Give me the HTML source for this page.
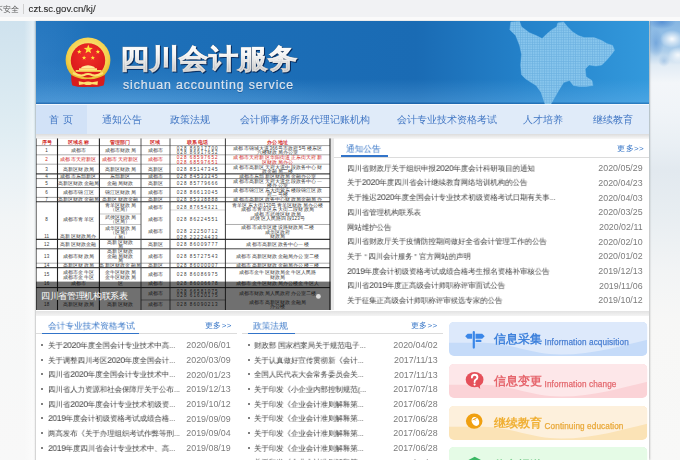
<!DOCTYPE html>
<html><head><meta charset="utf-8">
<style>
*{margin:0;padding:0;box-sizing:border-box}
html,body{width:680px;height:460px;overflow:hidden;background:#fff;font-family:"Liberation Sans",sans-serif}
.abs{position:absolute}
#addr{left:0;top:0;width:680px;height:17px;background:#f1f2f4}
#addrline{left:0;top:17px;width:680px;height:4px;background:#fafafa}
#addr .t1{left:-5.5px;top:4px;font-size:8px;line-height:11px;color:#5a5a5a;white-space:nowrap;transform:scale(1.02);will-change:transform}
#addr .sep{left:22.5px;top:4px;width:1px;height:10px;background:#cfcfcf}
#addr .url{left:28.6px;top:2.8px;font-size:9.6px;line-height:12px;color:#2a2a2a;white-space:nowrap;-webkit-text-stroke:.1px #2a2a2a}
#sky{left:0;top:21px;width:680px;height:439px;
 background:linear-gradient(90deg,rgba(255,255,255,0) 24px,rgba(255,255,255,.45) 33px,rgba(255,255,255,0) 35px),
 linear-gradient(180deg,#cfe2ee 0px,#d6e7f0 50px,#e0edf3 110px,#e9f1f5 150px,#f2f5f6 200px,#f6f7f7 260px,#f8f8f8 439px)}
#skyr{left:650px;top:21px;width:30px;height:439px;
 background:
 radial-gradient(ellipse 12px 9px at 22px 18px,rgba(255,255,255,.95),rgba(255,255,255,0)),
 radial-gradient(ellipse 10px 8px at 28px 34px,rgba(255,255,255,.85),rgba(255,255,255,0)),
 radial-gradient(ellipse 14px 7px at 12px 1px,rgba(80,140,210,.85),rgba(80,140,210,0)),
 radial-gradient(ellipse 8px 14px at 6px 22px,rgba(100,155,215,.7),rgba(100,155,215,0)),
 radial-gradient(ellipse 6px 6px at 14px 40px,rgba(130,175,220,.5),rgba(130,175,220,0)),
 linear-gradient(180deg,#86b6e2 0px,#94bfe6 14px,#accdea 30px,#e2ecf5 44px,#f3f6f9 62px,#f0f4f8 90px,#e9eff4 125px,#e2e9ef 150px,#e7edf1 190px,#f2f4f5 250px,#f7f7f6 300px,#f8f8f7 439px)}
#page{left:36px;top:21px;width:613px;height:439px;background:#fff;box-shadow:1.5px 0 1.5px rgba(0,0,0,.16),-1px 0 1px rgba(0,0,0,.14)}
#hdr{left:0;top:0;width:613px;height:83px;background:radial-gradient(ellipse 220px 45px at 80px 83px,rgba(90,165,225,.4),rgba(90,165,225,0)),radial-gradient(ellipse 60px 80px at 0px 40px,rgba(80,150,215,.3),rgba(80,150,215,0)),linear-gradient(90deg,#1f72bb 0%,#1c6eb7 30%,#1a6bb4 62%,#2482ca 80%,#3399dc 100%)}
#nav{left:0;top:83px;width:613px;height:29.7px;background:#e0ebf9;border-top:1px solid #f4f8fd}
#nav .it{top:0px;height:29.7px;line-height:29.7px;font-size:10px;font-weight:500;transform:scale(1.0);transform-origin:0 50%;will-change:transform;color:#4277c4;white-space:nowrap}
#nav .act{background:#d2e2f7}
.title{font-size:30px;font-weight:900;white-space:nowrap;line-height:36px}
.t-under{color:#a9a9a9;-webkit-text-stroke:1.1px #a9a9a9;filter:drop-shadow(1px 1.2px .5px rgba(0,25,70,.8))}
.t-over{background:linear-gradient(180deg,#ffffff 0%,#f0f0f0 35%,#c4c4c4 70%,#a8a8a8 100%);-webkit-background-clip:text;background-clip:text;-webkit-text-fill-color:transparent;-webkit-text-stroke:.35px rgba(255,255,255,.5)}
.sub{font-size:12.3px;color:#d8e2ec;white-space:nowrap;letter-spacing:0.9px;line-height:14px;-webkit-text-stroke:.2px #e2eaf3;text-shadow:0 .6px .6px rgba(0,30,80,.35)}
.cap{font-size:9px;font-weight:500;transform:scale(.963);transform-origin:0 0;color:#fff;white-space:nowrap;line-height:12px}
.ctitle{font-size:12px;font-weight:600;white-space:nowrap;line-height:16px;transform:scale(1.01);transform-origin:0 0;will-change:transform}
.cen{font-size:8.2px;letter-spacing:.1px;white-space:nowrap;line-height:9px;-webkit-text-stroke:.25px currentColor}
.dg{font-size:9.3px;letter-spacing:-.45px;line-height:1px}
.gband{background:#e8e8e8}
.panel{background:#fff}
.tab{font-size:9px;transform:scale(.964);transform-origin:0 0;will-change:transform;color:#3a78c8;white-space:nowrap}
.more{font-size:8px;font-weight:500;color:#3a78c8;white-space:nowrap;letter-spacing:.3px}
.row{font-size:8px;transform:scale(.925);transform-origin:0 50%;will-change:transform;color:#3a3a3a;white-space:nowrap;height:14.7px;line-height:14.7px}
.date{font-size:8.85px;color:#7c7c7c;white-space:nowrap;height:14.7px;line-height:14.7px}
.dot{width:2px;height:2px;background:#555;border-radius:1px}
</style></head><body>
<div id="addr" class="abs">
 <div class="abs t1">不安全</div>
 <div class="abs sep"></div>
 <div class="abs url">czt.sc.gov.cn/kj/</div>
</div>
<div id="addrline" class="abs"></div>
<div id="sky" class="abs"></div><div id="skyr" class="abs"></div>
<div id="page" class="abs">
 <div id="hdr" class="abs">
  <div class="abs" style="left:0;top:0;width:613px;height:83px;background:linear-gradient(180deg,rgba(255,255,255,0) 70%,rgba(130,195,245,.28) 97%,rgba(20,80,150,.5) 100%)"></div>
  <svg class="abs" style="left:0;top:0" width="613" height="83" viewBox="0 0 613 83">
   <defs>
    <pattern id="dots" width="2.4" height="2.4" patternUnits="userSpaceOnUse"><rect width="2.4" height="2.4" fill="#6fb3e2"/><rect width="1.8" height="1.8" fill="#8fcaef"/></pattern>
   </defs>
   <polygon fill="url(#dots)" stroke="#8ccaf0" stroke-width=".6" stroke-opacity=".6" opacity=".95" points="474.8,0.9 483.6,0.5 485.5,5.8 493.4,11.7 500.2,14.6 506.1,17.6 511.0,12.7 515.9,8.7 520.8,5.8 521.8,1.9 527.6,0.9 531.5,5.8 536.4,10.7 542.3,14.6 548.2,16.6 558.0,16.6 565.8,19.5 570.7,22.5 576.6,24.4 578.5,29.3 575.6,33.2 570.7,39.1 565.8,44.0 559.9,45.0 553.1,44.0 549.2,47.9 550.1,55.7 556.0,59.6 557.0,64.5 550.1,65.5 543.3,65.5 537.4,64.5 533.5,59.6 527.6,61.6 522.7,69.4 518.8,76.3 514.9,83.1 509.0,83.1 505.1,71.4 500.2,64.5 495.3,61.6 489.5,57.7 485.5,53.8 484.6,44.0 485.5,33.2 483.6,24.4 479.7,14.6 473.8,8.7"/>
  </svg>
  <svg class="abs" style="left:0;top:0" width="613" height="83" viewBox="36 21 613 83">
   <defs>
    <radialGradient id="gold" cx="50%" cy="40%" r="60%"><stop offset="0" stop-color="#fff3a0"/><stop offset=".75" stop-color="#f4d04a"/><stop offset="1" stop-color="#e0b020"/></radialGradient>
    <radialGradient id="redg" cx="50%" cy="35%" r="65%"><stop offset="0" stop-color="#f2302a"/><stop offset="1" stop-color="#d8181a"/></radialGradient>
   </defs>
   <circle cx="88" cy="60" r="22.4" fill="url(#gold)"/>
   <circle cx="88" cy="60.4" r="17.2" fill="url(#redg)"/>
   <path d="M71.2 75 Q71 82 72.5 85.5 Q80 87.8 88 86.8 Q96 87.8 103.5 85.5 Q105 82 104.8 75 Q96 80 88 79 Q80 80 71.2 75 Z" fill="#d81c1c"/>
   <polygon fill="#ffe23a" points="88.30,44.60 89.48,47.77 92.87,47.92 90.22,50.02 91.12,53.28 88.30,51.42 85.48,53.28 86.38,50.02 83.73,47.92 87.12,47.77"/>
   <polygon fill="#ffe23a" points="79.30,49.40 79.89,50.98 81.58,51.06 80.26,52.11 80.71,53.74 79.30,52.81 77.89,53.74 78.34,52.11 77.02,51.06 78.71,50.98"/><polygon fill="#ffe23a" points="97.90,49.40 98.49,50.98 100.18,51.06 98.86,52.11 99.31,53.74 97.90,52.81 96.49,53.74 96.94,52.11 95.62,51.06 97.31,50.98"/><polygon fill="#ffe23a" points="84.10,55.50 84.67,57.02 86.29,57.09 85.02,58.10 85.45,59.66 84.10,58.77 82.75,59.66 83.18,58.10 81.91,57.09 83.53,57.02"/><polygon fill="#ffe23a" points="92.80,55.50 93.37,57.02 94.99,57.09 93.72,58.10 94.15,59.66 92.80,58.77 91.45,59.66 91.88,58.10 90.61,57.09 92.23,57.02"/>
   <path d="M82 66.8 Q88 63.8 94 66.8 L95.5 68.5 H80.5 Z" fill="#ffeb9a"/>
   <rect x="79" y="68.3" width="18" height="1.8" fill="#ffe680"/>
   <rect x="75.7" y="70" width="25.8" height="1.8" fill="#f8dc60"/>
   <path d="M73 73 Q80 76.5 84 75 Q88 72.8 92 75 Q96 76.5 103 73" stroke="#ffe070" stroke-width="2" fill="none"/>
   <path d="M78.7 81.2 L84 82.3 Q88 80.5 92 82.3 L97.9 81.2 L97.5 85 L92 84.2 Q88 86 84 84.2 L79 85 Z" fill="#ffe070"/>
  </svg>
  <div class="abs title t-under" style="left:84.4px;top:21.6px;transform:scale(.985,.91);transform-origin:0 0">四川会计服务</div>
  <div class="abs title t-over" style="left:84.4px;top:21.6px;transform:scale(.985,.91);transform-origin:0 0">四川会计服务</div>
  <div class="abs sub" style="left:87px;top:56.6px">sichuan accounting service</div>
 </div>
 <div id="nav" class="abs">
  <div class="abs act" style="left:0;top:0;width:50.6px;height:29.7px"></div><div class="abs it" style="left:13.2px;letter-spacing:4px">首页</div>
  <div class="abs it" style="left:65.8px">通知公告</div>
  <div class="abs it" style="left:134.2px">政策法规</div>
  <div class="abs it" style="left:203.5px">会计师事务所及代理记账机构</div>
  <div class="abs it" style="left:360.6px">会计专业技术资格考试</div>
  <div class="abs it" style="left:487.3px">人才培养</div>
  <div class="abs it" style="left:556.8px">继续教育</div>
 </div>
 <div class="abs" style="left:0;top:112.7px;width:613px;height:5px;background:linear-gradient(180deg,#dcdcdc,#f8f8f8)"></div>
 <div id="slide" class="abs" style="left:0;top:117px;width:295px;height:172.3px;background:#fff"><svg class="abs" style="left:0;top:0" width="295" height="172.3" viewBox="0 0 295 172.3">
<rect width="295" height="172.3" fill="#fff"/>
<line x1="0" y1="7.6" x2="294" y2="7.6" stroke="#888" stroke-width="0.8"/>
<line x1="0" y1="16.8" x2="294" y2="16.8" stroke="#999" stroke-width="0.8"/>
<line x1="0" y1="26.2" x2="294" y2="26.2" stroke="#999" stroke-width="0.8"/>
<line x1="0" y1="35.9" x2="294" y2="35.9" stroke="#444" stroke-width="1.2"/>
<line x1="0" y1="40.6" x2="294" y2="40.6" stroke="#777" stroke-width="0.9"/>
<line x1="0" y1="49.5" x2="294" y2="49.5" stroke="#666" stroke-width="0.9"/>
<line x1="0" y1="59.4" x2="294" y2="59.4" stroke="#888" stroke-width="0.8"/>
<line x1="0" y1="63.8" x2="294" y2="63.8" stroke="#333" stroke-width="1.1"/>
<line x1="63.4" y1="76" x2="105" y2="76" stroke="#aaa" stroke-width="0.7"/>
<line x1="63.4" y1="86.5" x2="105" y2="86.5" stroke="#aaa" stroke-width="0.7"/>
<line x1="189.4" y1="86.5" x2="294" y2="86.5" stroke="#999" stroke-width="0.8"/>
<line x1="134" y1="72" x2="189.4" y2="72" stroke="#bbb" stroke-width="0.6"/>
<line x1="0" y1="101.3" x2="294" y2="101.3" stroke="#333" stroke-width="1.2"/>
<line x1="0" y1="110.8" x2="294" y2="110.8" stroke="#444" stroke-width="1.0"/>
<line x1="0" y1="125.2" x2="294" y2="125.2" stroke="#999" stroke-width="0.8"/>
<line x1="0" y1="129.6" x2="294" y2="129.6" stroke="#444" stroke-width="1.1"/>
<line x1="0" y1="149.6" x2="294" y2="149.6" stroke="#222" stroke-width="1.0"/>
<line x1="105" y1="162" x2="189.4" y2="162" stroke="#555" stroke-width="0.6"/>
<line x1="0" y1="0" x2="0" y2="172.3" stroke="#222" stroke-width="1.1"/>
<line x1="21.5" y1="0" x2="21.5" y2="172.3" stroke="#222" stroke-width="1.1"/>
<line x1="63.4" y1="0" x2="63.4" y2="172.3" stroke="#222" stroke-width="1.1"/>
<line x1="105" y1="0" x2="105" y2="172.3" stroke="#444" stroke-width="0.9"/>
<line x1="134" y1="0" x2="134" y2="172.3" stroke="#444" stroke-width="0.9"/>
<line x1="189.4" y1="0" x2="189.4" y2="172.3" stroke="#222" stroke-width="0.9"/>
<line x1="294" y1="0" x2="294" y2="172.3" stroke="#222" stroke-width="1.1"/>
<line x1="0" y1="0" x2="295" y2="0" stroke="#ddd" stroke-width="1"/>
<g font-size="4.6" font-weight="normal" letter-spacing="0.2" text-anchor="middle" font-family="Liberation Sans, sans-serif">
<text x="10.75" y="5.60" fill="#d02420" font-weight="bold">序号</text>
<text x="42.45" y="5.60" fill="#d02420" font-weight="bold">区域名称</text>
<text x="84.2" y="5.60" fill="#d02420" font-weight="bold">管理部门</text>
<text x="119.5" y="5.60" fill="#d02420" font-weight="bold">区域</text>
<text x="161.7" y="5.60" fill="#d02420" font-weight="bold">联系电话</text>
<text x="241.7" y="5.60" fill="#d02420" font-weight="bold">办公地址</text>
<text x="10.75" y="14.00" fill="#3a3a3a">1</text>
<text x="42.45" y="14.00" fill="#3a3a3a">成都市</text>
<text x="84.2" y="14.00" fill="#3a3a3a">成都市财政局</text>
<text x="119.5" y="14.00" fill="#3a3a3a">成都市</text>
<text x="161.7" y="11.75" fill="#3a3a3a" letter-spacing="1.05">028 86917700</text>
<text x="161.7" y="16.25" fill="#3a3a3a" letter-spacing="1.05">028 86917652</text>
<text x="241.7" y="11.75" fill="#3a3a3a">成都市锦城大道366号市政府5号楼东区</text>
<text x="241.7" y="16.25" fill="#3a3a3a">六楼财政局办公室</text>
<text x="10.75" y="23.30" fill="#d02420">2</text>
<text x="42.45" y="23.30" fill="#d02420">成都市天府新区</text>
<text x="84.2" y="23.30" fill="#d02420">成都市天府新区</text>
<text x="119.5" y="23.30" fill="#d02420">成都市</text>
<text x="161.7" y="21.05" fill="#d02420" letter-spacing="1.05">028 68597652</text>
<text x="161.7" y="25.55" fill="#d02420" letter-spacing="1.05">028 68597651</text>
<text x="241.7" y="21.05" fill="#d02420">成都市天府新区华阳街道正东街天府新</text>
<text x="241.7" y="25.55" fill="#d02420">区财政局办公</text>
<text x="10.75" y="32.80" fill="#3a3a3a">3</text>
<text x="42.45" y="32.80" fill="#3a3a3a">高新区财政局</text>
<text x="84.2" y="32.80" fill="#3a3a3a">高新区财政局</text>
<text x="119.5" y="32.80" fill="#3a3a3a">高新区</text>
<text x="161.7" y="32.80" fill="#3a3a3a" letter-spacing="1.05">028 85147345</text>
<text x="241.7" y="30.55" fill="#3a3a3a">成都市高新区天府大道中段政务中心财</text>
<text x="241.7" y="35.05" fill="#3a3a3a">政金融局二楼</text>
<text x="10.75" y="40.00" fill="#3a3a3a">4</text>
<text x="42.45" y="40.00" fill="#3a3a3a">成都市东部新区</text>
<text x="84.2" y="40.00" fill="#3a3a3a">东部新区</text>
<text x="119.5" y="40.00" fill="#3a3a3a">成都市</text>
<text x="161.7" y="40.00" fill="#3a3a3a" letter-spacing="1.05">028 84533345</text>
<text x="241.7" y="40.00" fill="#3a3a3a">成都市东部新区财政局金融办公室</text>
<text x="10.75" y="46.80" fill="#3a3a3a">5</text>
<text x="42.45" y="46.80" fill="#3a3a3a">高新区财政金融局</text>
<text x="84.2" y="46.80" fill="#3a3a3a">金融局财政</text>
<text x="119.5" y="46.80" fill="#3a3a3a">高新区</text>
<text x="161.7" y="46.80" fill="#3a3a3a" letter-spacing="1.05">028 85779666</text>
<text x="241.7" y="44.55" fill="#3a3a3a">成都市高新区天府大道北段政务中心一</text>
<text x="241.7" y="49.05" fill="#3a3a3a">楼办公室</text>
<text x="10.75" y="56.20" fill="#3a3a3a">6</text>
<text x="42.45" y="56.20" fill="#3a3a3a">成都市锦江区</text>
<text x="84.2" y="56.20" fill="#3a3a3a">锦江区财政局</text>
<text x="119.5" y="56.20" fill="#3a3a3a">成都市</text>
<text x="161.7" y="56.20" fill="#3a3a3a" letter-spacing="1.05">028 86613045</text>
<text x="241.7" y="53.95" fill="#3a3a3a">成都市锦江区东大街紫东楼段锦江区政</text>
<text x="241.7" y="58.45" fill="#3a3a3a">府二号楼</text>
<text x="10.75" y="63.40" fill="#3a3a3a">7</text>
<text x="42.45" y="63.40" fill="#3a3a3a">高新区财政金融局</text>
<text x="84.2" y="63.40" fill="#3a3a3a">高新区财政金融</text>
<text x="119.5" y="63.40" fill="#3a3a3a">高新区</text>
<text x="161.7" y="63.40" fill="#3a3a3a" letter-spacing="1.05">028 85338888</text>
<text x="241.7" y="63.40" fill="#3a3a3a">成都市高新区政务中心财政局金融局办</text>
<text x="10.75" y="82.80" fill="#3a3a3a">8</text>
<text x="42.45" y="82.80" fill="#3a3a3a">成都市青羊区</text>
<text x="84.2" y="68.80" fill="#3a3a3a">青羊区财政局</text>
<text x="84.2" y="73.30" fill="#3a3a3a">（区局）</text>
<text x="84.2" y="80.80" fill="#3a3a3a">武侯区财政局</text>
<text x="84.2" y="85.30" fill="#3a3a3a">（区局）</text>
<text x="84.2" y="91.80" fill="#3a3a3a">成华区财政局</text>
<text x="84.2" y="96.30" fill="#3a3a3a">（区局）</text>
<text x="84.2" y="100.80" fill="#3a3a3a">（局）</text>
<text x="119.5" y="70.80" fill="#3a3a3a">成都市</text>
<text x="119.5" y="82.80" fill="#3a3a3a">成都市</text>
<text x="119.5" y="94.80" fill="#3a3a3a">成都市</text>
<text x="161.7" y="70.80" fill="#3a3a3a" letter-spacing="1.05">028 87654321</text>
<text x="161.7" y="82.80" fill="#3a3a3a" letter-spacing="1.05">028 86224551</text>
<text x="161.7" y="94.80" fill="#3a3a3a" letter-spacing="1.05">028 22250712</text>
<text x="161.7" y="100.80" fill="#3a3a3a" letter-spacing="1.05">028 22224433</text>
<text x="241.7" y="68.80" fill="#3a3a3a">青羊区东大街120号青羊区财政局办公楼</text>
<text x="241.7" y="73.30" fill="#3a3a3a">成都市青羊区东大街二段财政局</text>
<text x="241.7" y="77.80" fill="#3a3a3a">成都市武侯区财政局</text>
<text x="241.7" y="82.30" fill="#3a3a3a">武侯区人民路四段123号</text>
<text x="241.7" y="91.30" fill="#3a3a3a">成都市成华区建设路财政局二楼</text>
<text x="241.7" y="95.80" fill="#3a3a3a">成华区政府</text>
<text x="241.7" y="100.30" fill="#3a3a3a">财政局</text>
<text x="10.75" y="100.30" fill="#3a3a3a">11</text>
<text x="42.45" y="100.30" fill="#3a3a3a">高新区财政局办</text>
<text x="10.75" y="107.80" fill="#3a3a3a">12</text>
<text x="42.45" y="107.80" fill="#3a3a3a">高新区财政金融</text>
<text x="84.2" y="105.55" fill="#3a3a3a">高新区财政</text>
<text x="84.2" y="110.05" fill="#3a3a3a">局</text>
<text x="119.5" y="107.80" fill="#3a3a3a">高新区</text>
<text x="161.7" y="107.80" fill="#3a3a3a" letter-spacing="1.05">028 86009777</text>
<text x="241.7" y="107.80" fill="#3a3a3a">成都市高新区政务中心一楼</text>
<text x="10.75" y="119.80" fill="#3a3a3a">13</text>
<text x="42.45" y="119.80" fill="#3a3a3a">成都市财政局</text>
<text x="84.2" y="115.30" fill="#3a3a3a">高新区财政</text>
<text x="84.2" y="119.80" fill="#3a3a3a">金融局财政</text>
<text x="84.2" y="124.30" fill="#3a3a3a">局</text>
<text x="119.5" y="119.80" fill="#3a3a3a">成都市</text>
<text x="161.7" y="119.80" fill="#3a3a3a" letter-spacing="1.05">028 85727543</text>
<text x="241.7" y="119.80" fill="#3a3a3a">成都市高新区财政金融局办公室二楼</text>
<text x="10.75" y="129.20" fill="#3a3a3a">14</text>
<text x="42.45" y="129.20" fill="#3a3a3a">高新区财政局</text>
<text x="84.2" y="129.20" fill="#3a3a3a">高新区财政金融局</text>
<text x="119.5" y="129.20" fill="#3a3a3a">高新区</text>
<text x="161.7" y="129.20" fill="#3a3a3a" letter-spacing="1.05">028 86000007</text>
<text x="241.7" y="129.20" fill="#3a3a3a">成都市高新区财政金融局办公楼三楼</text>
<text x="10.75" y="138.30" fill="#3a3a3a">15</text>
<text x="42.45" y="136.05" fill="#3a3a3a">成都市金牛区</text>
<text x="42.45" y="140.55" fill="#3a3a3a">成都市金牛区</text>
<text x="84.2" y="136.05" fill="#3a3a3a">金牛区财政局</text>
<text x="84.2" y="140.55" fill="#3a3a3a">金牛区财政局</text>
<text x="119.5" y="138.30" fill="#3a3a3a">成都市</text>
<text x="161.7" y="138.30" fill="#3a3a3a" letter-spacing="1.05">028 86086975</text>
<text x="241.7" y="136.05" fill="#3a3a3a">成都市金牛区财政局金牛区人民路</text>
<text x="241.7" y="140.55" fill="#3a3a3a">财政局</text>
<text x="10.75" y="146.80" fill="#3a3a3a">16</text>
<text x="42.45" y="146.80" fill="#3a3a3a">成都市</text>
<text x="84.2" y="146.80" fill="#3a3a3a">区</text>
<text x="119.5" y="146.80" fill="#3a3a3a">成都市</text>
<text x="161.7" y="146.80" fill="#3a3a3a" letter-spacing="1.05">028 86006678</text>
<text x="241.7" y="146.80" fill="#3a3a3a">成都市金牛区财政局办公楼金牛区人</text>
<text x="10.75" y="156.80" fill="#3a3a3a"></text>
<text x="42.45" y="156.80" fill="#3a3a3a"></text>
<text x="84.2" y="156.80" fill="#3a3a3a"></text>
<text x="119.5" y="156.80" fill="#3a3a3a">成都市</text>
<text x="161.7" y="154.55" fill="#3a3a3a" letter-spacing="1.05">028 66581075</text>
<text x="161.7" y="159.05" fill="#3a3a3a" letter-spacing="1.05">028 61620175</text>
<text x="241.7" y="156.80" fill="#3a3a3a">成都市财政局人民政府办公室二楼</text>
<text x="10.75" y="167.80" fill="#3a3a3a">18</text>
<text x="42.45" y="167.80" fill="#3a3a3a">高新区财政局</text>
<text x="84.2" y="167.80" fill="#3a3a3a">高新区财政</text>
<text x="119.5" y="167.80" fill="#3a3a3a">成都市</text>
<text x="161.7" y="167.80" fill="#3a3a3a" letter-spacing="1.05">028 86090213</text>
<text x="241.7" y="165.55" fill="#3a3a3a">成都市高新区财政金融局</text>
<text x="241.7" y="170.05" fill="#3a3a3a">办公楼</text>
</g>
<rect x="0" y="143.60" width="294.5" height="28.70" fill="rgba(0,0,0,.56)"/>
<circle cx="282.4" cy="158.4" r="2.4" fill="#ddd"/>
</svg><div class="abs cap" style="left:5.4px;top:152px">四川省管理机构联系表</div></div>
 <div class="abs gband" style="left:295px;top:117px;width:3px;height:172px"></div>
 <div id="notice" class="abs panel" style="left:298px;top:117.5px;width:315px;height:172.5px"></div>
 <!--LISTS-->
 <div class="abs tab" style="left:309.80px;top:122.00px">通知公告</div>
 <div class="abs" style="left:298.00px;top:135.80px;width:315px;height:1px;background:#dcdcdc"></div>
 <div class="abs" style="left:304.90px;top:134.40px;width:47px;height:1.8px;background:#3274c9"></div>
 <div class="abs more" style="left:581.40px;top:121.50px">更多&gt;&gt;</div>
 <div class="abs row" style="left:311.40px;top:140.75px">四川省财政厅关于组织申报<span class="dg">2020</span>年度会计科研项目的通知</div>
 <div class="abs date" style="left:524.00px;top:140.15px;width:82.6px;text-align:right">2020/05/29</div>
 <div class="abs row" style="left:311.40px;top:155.45px">关于<span class="dg">2020</span>年度四川省会计继续教育网络培训机构的公告</div>
 <div class="abs date" style="left:524.00px;top:154.85px;width:82.6px;text-align:right">2020/04/23</div>
 <div class="abs row" style="left:311.40px;top:170.15px">关于推迟<span class="dg">2020</span>年度全国会计专业技术初级资格考试日期有关事...</div>
 <div class="abs date" style="left:524.00px;top:169.55px;width:82.6px;text-align:right">2020/04/03</div>
 <div class="abs row" style="left:311.40px;top:184.85px">四川省管理机构联系表</div>
 <div class="abs date" style="left:524.00px;top:184.25px;width:82.6px;text-align:right">2020/03/25</div>
 <div class="abs row" style="left:311.40px;top:199.55px">网站维护公告</div>
 <div class="abs date" style="left:524.00px;top:198.95px;width:82.6px;text-align:right">2020/02/11</div>
 <div class="abs row" style="left:311.40px;top:214.25px">四川省财政厅关于疫情防控期间做好全省会计管理工作的公告</div>
 <div class="abs date" style="left:524.00px;top:213.65px;width:82.6px;text-align:right">2020/02/10</div>
 <div class="abs row" style="left:311.40px;top:228.95px">关于<span style="margin:0 1.5px 0 3px">“</span>四川会计服务<span style="margin:0 3px 0 1.5px">”</span>官方网站的声明</div>
 <div class="abs date" style="left:524.00px;top:228.35px;width:82.6px;text-align:right">2020/01/02</div>
 <div class="abs row" style="left:311.40px;top:243.65px"><span class="dg">2019</span>年度会计初级资格考试成绩合格考生报名资格补审核公告</div>
 <div class="abs date" style="left:524.00px;top:243.05px;width:82.6px;text-align:right">2019/12/13</div>
 <div class="abs row" style="left:311.40px;top:258.35px">四川省<span class="dg">2019</span>年度正高级会计师职称评审面试公告</div>
 <div class="abs date" style="left:524.00px;top:257.75px;width:82.6px;text-align:right">2019/11/06</div>
 <div class="abs row" style="left:311.40px;top:273.05px">关于征集正高级会计师职称评审候选专家的公告</div>
 <div class="abs date" style="left:524.00px;top:272.45px;width:82.6px;text-align:right">2019/10/12</div>
 <div class="abs tab" style="left:11.80px;top:298.70px">会计专业技术资格考试</div>
 <div class="abs" style="left:0.00px;top:312.20px;width:200.7px;height:1px;background:#dcdcdc"></div>
 <div class="abs" style="left:5.90px;top:311.60px;width:97.6px;height:1.6px;background:#3274c9"></div>
 <div class="abs more" style="left:169.20px;top:299.00px">更多&gt;&gt;</div>
 <div class="abs dot" style="left:5.40px;top:323.00px"></div>
 <div class="abs row" style="left:11.50px;top:318.05px">关于<span class="dg">2020</span>年度全国会计专业技术中高...</div>
 <div class="abs date" style="left:114.00px;top:317.45px;width:80.6px;text-align:right">2020/06/01</div>
 <div class="abs dot" style="left:5.40px;top:337.67px"></div>
 <div class="abs row" style="left:11.50px;top:332.72px">关于调整四川考区<span class="dg">2020</span>年度全国会计...</div>
 <div class="abs date" style="left:114.00px;top:332.12px;width:80.6px;text-align:right">2020/03/09</div>
 <div class="abs dot" style="left:5.40px;top:352.34px"></div>
 <div class="abs row" style="left:11.50px;top:347.39px">四川省<span class="dg">2020</span>年度全国会计专业技术中...</div>
 <div class="abs date" style="left:114.00px;top:346.79px;width:80.6px;text-align:right">2020/01/23</div>
 <div class="abs dot" style="left:5.40px;top:367.01px"></div>
 <div class="abs row" style="left:11.50px;top:362.06px">四川省人力资源和社会保障厅关于公布...</div>
 <div class="abs date" style="left:114.00px;top:361.46px;width:80.6px;text-align:right">2019/12/13</div>
 <div class="abs dot" style="left:5.40px;top:381.68px"></div>
 <div class="abs row" style="left:11.50px;top:376.73px">四川省<span class="dg">2020</span>年度会计专业技术初级资...</div>
 <div class="abs date" style="left:114.00px;top:376.13px;width:80.6px;text-align:right">2019/10/12</div>
 <div class="abs dot" style="left:5.40px;top:396.35px"></div>
 <div class="abs row" style="left:11.50px;top:391.40px"><span class="dg">2019</span>年度会计初级资格考试成绩合格...</div>
 <div class="abs date" style="left:114.00px;top:390.80px;width:80.6px;text-align:right">2019/09/09</div>
 <div class="abs dot" style="left:5.40px;top:411.02px"></div>
 <div class="abs row" style="left:11.50px;top:406.07px">两高发布《关于办理组织考试作弊等刑...</div>
 <div class="abs date" style="left:114.00px;top:405.47px;width:80.6px;text-align:right">2019/09/04</div>
 <div class="abs dot" style="left:5.40px;top:425.69px"></div>
 <div class="abs row" style="left:11.50px;top:420.74px"><span class="dg">2019</span>年度四川省会计专业技术中、高...</div>
 <div class="abs date" style="left:114.00px;top:420.14px;width:80.6px;text-align:right">2019/08/19</div>
 <div class="abs tab" style="left:217.20px;top:298.70px">政策法规</div>
 <div class="abs" style="left:206.00px;top:312.20px;width:201px;height:1px;background:#dcdcdc"></div>
 <div class="abs" style="left:211.80px;top:311.60px;width:46.8px;height:1.6px;background:#3274c9"></div>
 <div class="abs more" style="left:375.00px;top:299.00px">更多&gt;&gt;</div>
 <div class="abs dot" style="left:211.90px;top:323.00px"></div>
 <div class="abs row" style="left:217.70px;top:318.05px">财政部 国家档案局关于规范电子...</div>
 <div class="abs date" style="left:320.00px;top:317.45px;width:81.6px;text-align:right">2020/04/02</div>
 <div class="abs dot" style="left:211.90px;top:337.67px"></div>
 <div class="abs row" style="left:217.70px;top:332.72px">关于认真做好宣传贯彻新《会计...</div>
 <div class="abs date" style="left:320.00px;top:332.12px;width:81.6px;text-align:right">2017/11/13</div>
 <div class="abs dot" style="left:211.90px;top:352.34px"></div>
 <div class="abs row" style="left:217.70px;top:347.39px">全国人民代表大会常务委员会关...</div>
 <div class="abs date" style="left:320.00px;top:346.79px;width:81.6px;text-align:right">2017/11/13</div>
 <div class="abs dot" style="left:211.90px;top:367.01px"></div>
 <div class="abs row" style="left:217.70px;top:362.06px">关于印发《小企业内部控制规范(...</div>
 <div class="abs date" style="left:320.00px;top:361.46px;width:81.6px;text-align:right">2017/07/18</div>
 <div class="abs dot" style="left:211.90px;top:381.68px"></div>
 <div class="abs row" style="left:217.70px;top:376.73px">关于印发《企业会计准则解释第...</div>
 <div class="abs date" style="left:320.00px;top:376.13px;width:81.6px;text-align:right">2017/06/28</div>
 <div class="abs dot" style="left:211.90px;top:396.35px"></div>
 <div class="abs row" style="left:217.70px;top:391.40px">关于印发《企业会计准则解释第...</div>
 <div class="abs date" style="left:320.00px;top:390.80px;width:81.6px;text-align:right">2017/06/28</div>
 <div class="abs dot" style="left:211.90px;top:411.02px"></div>
 <div class="abs row" style="left:217.70px;top:406.07px">关于印发《企业会计准则解释第...</div>
 <div class="abs date" style="left:320.00px;top:405.47px;width:81.6px;text-align:right">2017/06/28</div>
 <div class="abs dot" style="left:211.90px;top:425.69px"></div>
 <div class="abs row" style="left:217.70px;top:420.74px">关于印发《企业会计准则解释第...</div>
 <div class="abs date" style="left:320.00px;top:420.14px;width:81.6px;text-align:right">2017/06/28</div>
 <div class="abs dot" style="left:211.90px;top:440.36px"></div>
 <div class="abs row" style="left:217.70px;top:435.41px">关于印发《企业会计准则解释第...</div>
 <div class="abs date" style="left:320.00px;top:434.81px;width:81.6px;text-align:right">2017/06/28</div>
 <!--/LISTS-->
 <!--CARDS-->
<svg class="abs" style="left:413.3px;top:300.9px;overflow:visible" width="198.3" height="34" viewBox="0 0 198.3 34">
<defs><clipPath id="cp321"><rect width="198.3" height="34" rx="5"/></clipPath></defs>
<g clip-path="url(#cp321)"><rect width="198.3" height="34" fill="#c5dbf9"/>
<path d="M0 0 H198.3 V17.7 C175 23, 145 32.5, 112 32.5 C82 32.5, 62 21, 34 20.8 H0 Z" fill="#dde9fb"/></g>
<g>
<path d="M16.2 14.3 L18.6 11.8 H23.1 V16.8 H18.6 Z" fill="#3b87e8"/>
<path d="M26.5 11.8 H33.2 L35.7 14.3 L33.2 16.8 H26.5 Z" fill="#3b87e8"/>
<rect x="26.5" y="17.7" width="6" height="2.4" rx="1.2" fill="#3b87e8"/>
<line x1="24.8" y1="10" x2="24.8" y2="25.6" stroke="#3b87e8" stroke-width="2.2" stroke-linecap="round"/>
</g>
</svg>
<div class="abs ctitle" style="left:457.7px;top:310.4px;color:#3f82dc">信息采集</div>
<div class="abs cen" style="left:508.6px;top:317.3px;color:#4a7fd2">Information acquisition</div>
<svg class="abs" style="left:413.3px;top:342.9px;overflow:visible" width="198.3" height="34" viewBox="0 0 198.3 34">
<defs><clipPath id="cp363"><rect width="198.3" height="34" rx="5"/></clipPath></defs>
<g clip-path="url(#cp363)"><rect width="198.3" height="34" fill="#fbd3d7"/>
<path d="M0 0 H198.3 V17.7 C175 23, 145 32.5, 112 32.5 C82 32.5, 62 21, 34 20.8 H0 Z" fill="#fde7e9"/></g>
<g><ellipse cx="25.6" cy="15.7" rx="8.9" ry="7.6" fill="#e5505a"/>
<path d="M27 21 L31.2 24.9 L30.6 20 Z" fill="#e5505a"/>
<path d="M22.9 13.6 Q22.9 10.8 25.6 10.8 Q28.4 10.8 28.4 13.3 Q28.4 14.9 26.7 15.7 Q25.6 16.3 25.6 18" stroke="#fff" stroke-width="1.9" fill="none" stroke-linecap="round"/>
<circle cx="25.6" cy="20.6" r="1.1" fill="#fff"/></g>
</svg>
<div class="abs ctitle" style="left:457.7px;top:352.4px;color:#e6666d">信息变更</div>
<div class="abs cen" style="left:508.6px;top:359.3px;color:#e3686e">Information change</div>
<svg class="abs" style="left:413.3px;top:384.9px;overflow:visible" width="198.3" height="34" viewBox="0 0 198.3 34">
<defs><clipPath id="cp405"><rect width="198.3" height="34" rx="5"/></clipPath></defs>
<g clip-path="url(#cp405)"><rect width="198.3" height="34" fill="#fbe3b6"/>
<path d="M0 0 H198.3 V17.7 C175 23, 145 32.5, 112 32.5 C82 32.5, 62 21, 34 20.8 H0 Z" fill="#fdf0dc"/></g>
<g><ellipse cx="25.2" cy="15.1" rx="8.3" ry="7.7" fill="#f0a010"/>
<ellipse cx="26.4" cy="15.4" rx="3.6" ry="4.7" transform="rotate(-28 26.4 15.4)" fill="#fff"/>
<path d="M23.6 13.9 L28.2 11.6" stroke="#f0a010" stroke-width="0.9"/>
<path d="M25.6 12.9 L26.3 14.6" stroke="#f0a010" stroke-width="0.9"/></g>
</svg>
<div class="abs ctitle" style="left:457.7px;top:394.4px;color:#f0b035">继续教育</div>
<div class="abs cen" style="left:508.6px;top:401.3px;color:#e9a93a">Continuing education</div>
<svg class="abs" style="left:413.3px;top:426.3px;overflow:visible" width="198.3" height="34" viewBox="0 0 198.3 34">
<defs><clipPath id="cp447"><rect width="198.3" height="34" rx="5"/></clipPath></defs>
<g clip-path="url(#cp447)"><rect width="198.3" height="34" fill="#cdf3d0"/>
<path d="M0 0 H198.3 V17.7 C175 23, 145 32.5, 112 32.5 C82 32.5, 62 21, 34 20.8 H0 Z" fill="#e5fbe6"/></g>
<g><path d="M17.5 14 L25.7 9.8 L33.9 14 V24 H17.5 Z" fill="#3cb864"/></g>
</svg>
<div class="abs ctitle" style="left:457.7px;top:435.8px;color:#7acc8e">信息报送</div>
<div class="abs cen" style="left:508.6px;top:442.7px;color:#6cc080">Information submission</div>
<!--/CARDS-->
 <div class="abs" style="left:0;top:290px;width:613px;height:5px;background:linear-gradient(180deg,#e2e2e2,#f4f4f4)"></div>
</div>
</body></html>
